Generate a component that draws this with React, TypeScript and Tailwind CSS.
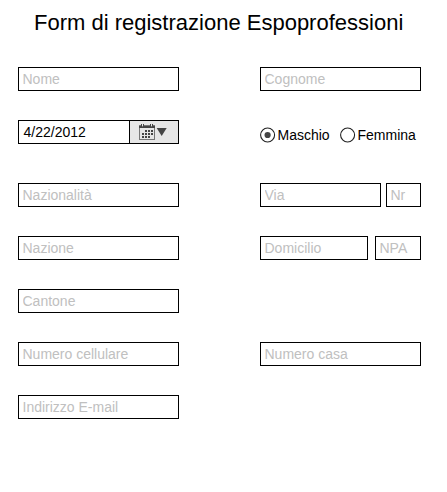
import React from "react";

function Field({ label, className = "w-[161px]" }: { label: string; className?: string }) {
  return (
    <input
      aria-label={label}
      placeholder={label}
      className={`block h-6 border border-black bg-white pl-[3.5px] text-sm placeholder:text-[#c0c0c0] outline-none ${className}`}
    />
  );
}

function DateField() {
  return (
    <div className="flex h-6 w-[161px] border border-black text-sm leading-[22px]">
      <span className="w-[110px] pl-[4.5px]">4/22/2012</span>
      <button type="button" aria-label="Calendario" className="flex flex-1 items-center justify-center border-l border-black bg-[#e6e6e6]">
        <svg width="30" height="18" viewBox="0 0 30 18" fill="#444" shapeRendering="crispEdges">
          <path fill="#777" fillRule="evenodd" d="M0 2h16v15H0zM1 5v11h14V5z" />
          <path d="M0 3h2v1h3V3h6v1h3V3h2v2H0z" />
          <path d="M2 1h1v3H2zM4 1h1v3H4zM11 1h1v3h-1zM13 1h1v3h-1z" />
          <path fill="#e6e6e6" d="M3 2h1v1H3zM12 2h1v1h-1z" />
          <path d="M6 7h2v2H6zM9 7h2v2H9zM12 7h2v2h-2zM3 10h2v2H3zM6 10h2v2H6zM9 10h2v2H9zM12 10h2v2h-2zM3 13h2v2H3zM6 13h2v2H6zM9 13h2v2H9z" />
          <path shapeRendering="auto" d="M17.700 5h10l-5 8z" />
        </svg>
      </button>
    </div>
  );
}

function Choice({ label, checked = false }: { label: string; checked?: boolean }) {
  return (
    <label className="flex items-center gap-[1.5px]">
      <svg width="16" height="16" viewBox="0 0 16 16">
        <circle cx="7.600" cy="8" r="7" fill="white" stroke="#222" strokeWidth="1.1" />
        {checked && <circle cx="7.600" cy="8" r="3.1" fill="#444" />}
      </svg>
      {label}
    </label>
  );
}

export default function App() {
  return (
    <main className="h-[492px] w-[447px] overflow-hidden bg-white pl-[18px] pt-2.5 font-['Liberation_Sans',Arial,sans-serif] text-black">
      <h1 className="ml-4 whitespace-nowrap text-[22px] leading-[26px]">Form di registrazione Espoprofessioni</h1>
      <form className="mt-[31px] grid grid-cols-[161px_161px] gap-x-[81px]">
        <div className="h-[53px]"><Field label="Nome" /></div>
        <Field label="Cognome" />
        <div className="h-[63px]"><DateField /></div>
        <div className="flex h-[30px] items-center gap-[10.4px] text-sm"><Choice label="Maschio" checked /><Choice label="Femmina" /></div>
        <div className="h-[53px]"><Field label="Nazionalità" /></div>
        <div className="flex gap-[5px]"><Field label="Via" className="w-[121px]" /><Field label="Nr" className="w-[35px]" /></div>
        <div className="h-[53px]"><Field label="Nazione" /></div>
        <div className="flex gap-[7px]"><Field label="Domicilio" className="w-[108px]" /><Field label="NPA" className="w-[46px]" /></div>
        <div className="col-span-2 h-[53px]"><Field label="Cantone" /></div>
        <div className="h-[53px]"><Field label="Numero cellulare" /></div>
        <Field label="Numero casa" />
        <Field label="Indirizzo E-mail" />
      </form>
    </main>
  );
}
